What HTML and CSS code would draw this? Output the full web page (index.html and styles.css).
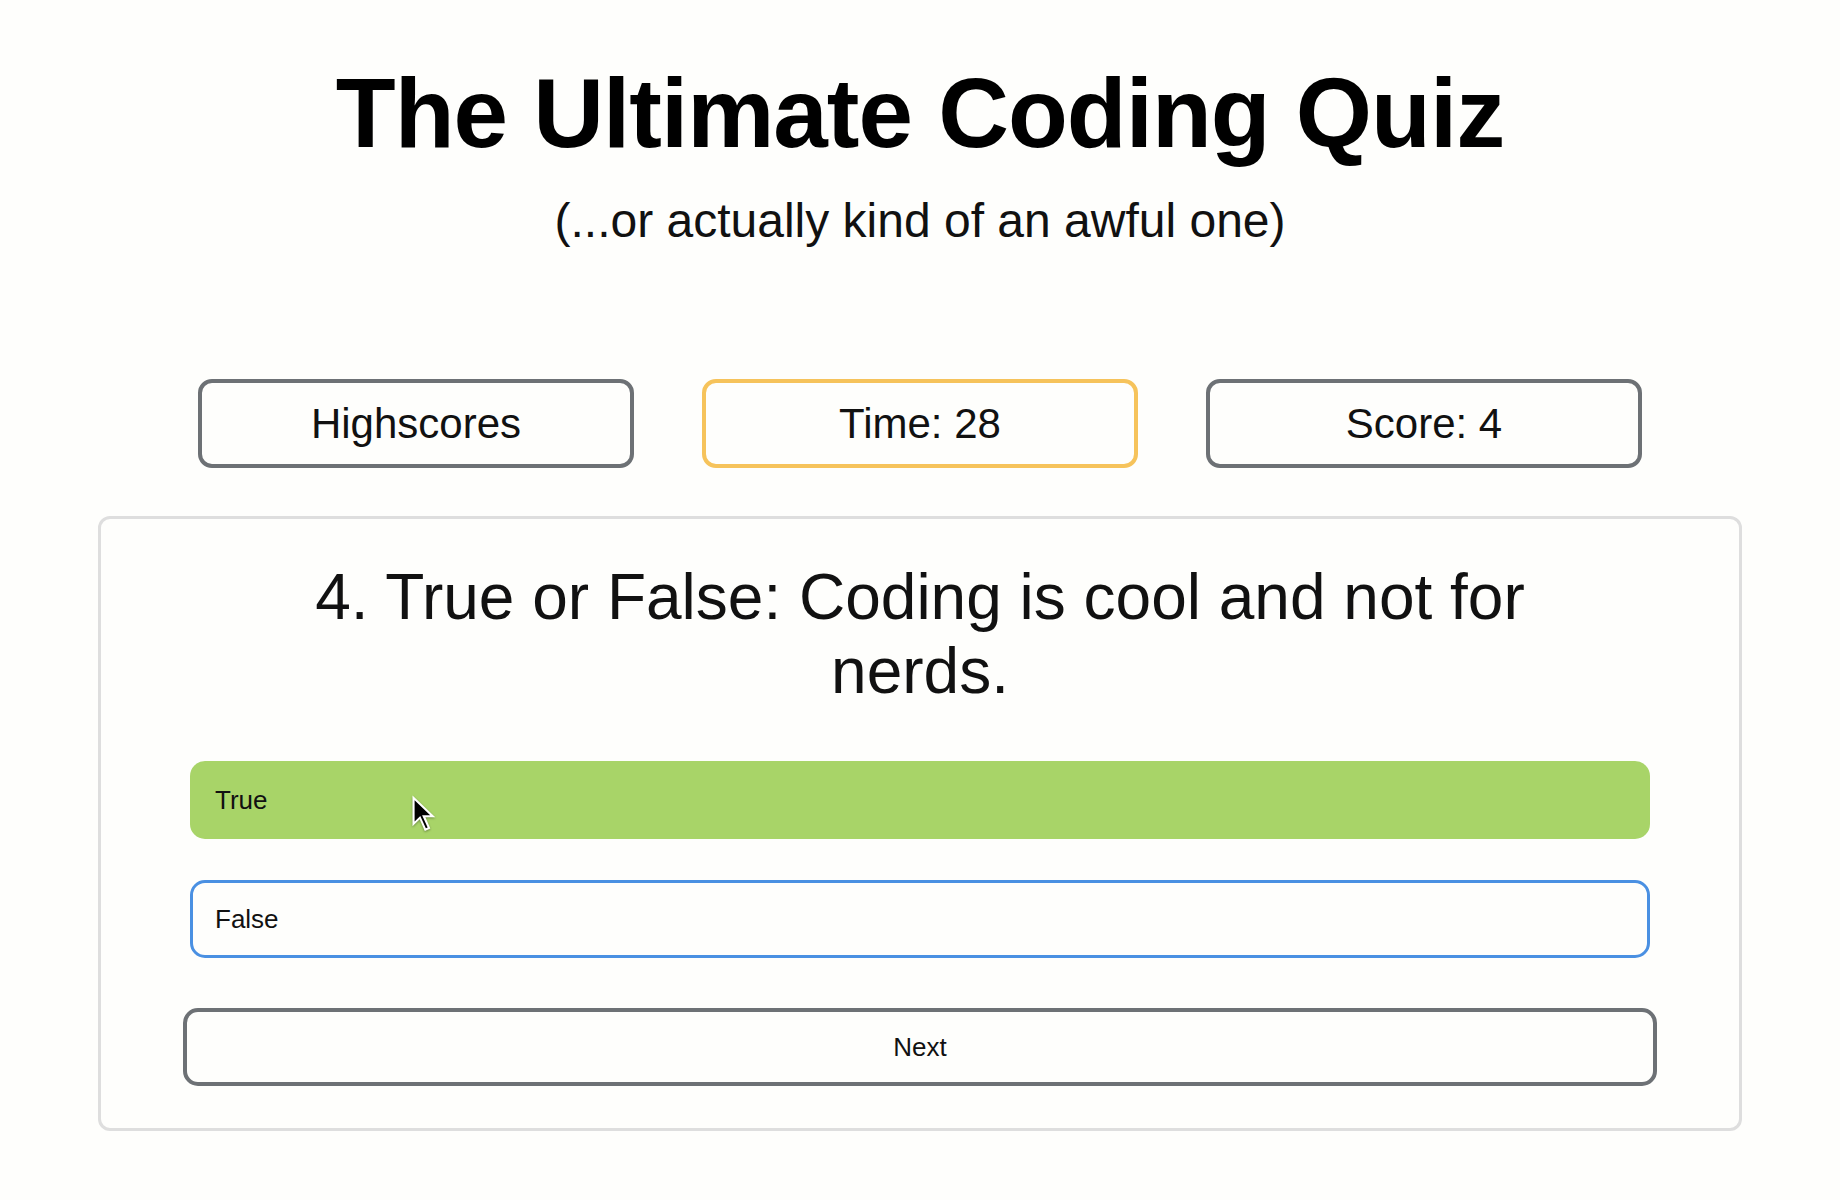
FILE: index.html
```html
<!DOCTYPE html>
<html lang="en">
<head>
<meta charset="utf-8">
<title>The Ultimate Coding Quiz</title>
<link rel="stylesheet" href="styles.css">
</head>
<body>
  <header class="header">
    <h1 class="title">The Ultimate Coding Quiz</h1>
    <p class="subtitle">(...or actually kind of an awful one)</p>
  </header>

  <section class="stats">
    <button class="stat">Highscores</button>
    <div class="stat stat-time">Time: 28</div>
    <div class="stat">Score: 4</div>
  </section>

  <main class="card">
    <h2 class="question">4. True or False: Coding is cool and not for nerds.</h2>
    <div class="answers">
      <button class="answer answer-correct">True
        <svg class="cursor" viewBox="0 0 18 26" width="27" height="39" aria-hidden="true">
          <path d="M1 1 L1 21.5 L5.8 16.9 L9.2 24.6 L12.9 23 L9.6 15.5 L16.2 15.5 Z" fill="#fff"/>
          <path d="M2.4 4.2 L2.4 18.3 L6.2 14.6 L9.9 22.8 L11.1 22.3 L7.4 14.1 L12.8 14.1 Z" fill="#000"/>
        </svg>
      </button>
      <button class="answer answer-selected">False</button>
    </div>
    <button class="next">Next</button>
  </main>
</body>
</html>
```

FILE: styles.css
```css
html, body {
  margin: 0;
  padding: 0;
}

body {
  background: #fefefc;
  color: #111;
  font-family: "Liberation Sans", Arial, Helvetica, sans-serif;
}

.header {
  text-align: center;
  padding-top: 57px;
}

.title {
  margin: 0;
  font-size: 98px;
  line-height: 113px;
  font-weight: 700;
  letter-spacing: -1px;
  color: #000;
}

.subtitle {
  margin: 23px 0 0;
  font-size: 48px;
  line-height: 55px;
  color: #111;
}

.stats {
  display: flex;
  justify-content: center;
  gap: 68px;
  margin-top: 131px;
}

.stat {
  box-sizing: border-box;
  width: 436px;
  height: 89px;
  border: 4px solid #6d7175;
  border-radius: 14px;
  background: transparent;
  display: flex;
  align-items: center;
  justify-content: center;
  font-family: inherit;
  font-size: 42px;
  color: #111;
  padding: 0;
}

.stat-time {
  border-color: #f6c35b;
}

.card {
  box-sizing: border-box;
  width: 1644px;
  margin: 48px auto 0;
  border: 3px solid #dedede;
  border-radius: 12px;
  padding: 41px 0 42px;
}

.question {
  max-width: 1300px;
  margin: 0 auto;
  font-size: 64px;
  line-height: 74px;
  font-weight: 400;
  text-align: center;
  color: #111;
}

.answers {
  width: 1460px;
  margin: 53px auto 0;
  display: flex;
  flex-direction: column;
  gap: 41px;
}

.answer {
  position: relative;
  box-sizing: border-box;
  height: 78px;
  border: 3px solid transparent;
  border-radius: 15px;
  padding: 0 0 0 22px;
  background: transparent;
  text-align: left;
  font-family: inherit;
  font-size: 26px;
  color: #111;
}

.answer-correct {
  background: #a8d468;
}

.answer-selected {
  border-color: #4a90e2;
}

.cursor {
  position: absolute;
  left: 218px;
  top: 30px;
  filter: drop-shadow(0 1px 1px rgba(0, 0, 0, 0.35));
}

.next {
  display: block;
  box-sizing: border-box;
  width: 1474px;
  height: 78px;
  margin: 50px auto 0;
  border: 4px solid #6d7175;
  border-radius: 15px;
  background: transparent;
  font-family: inherit;
  font-size: 26px;
  color: #111;
}
```
